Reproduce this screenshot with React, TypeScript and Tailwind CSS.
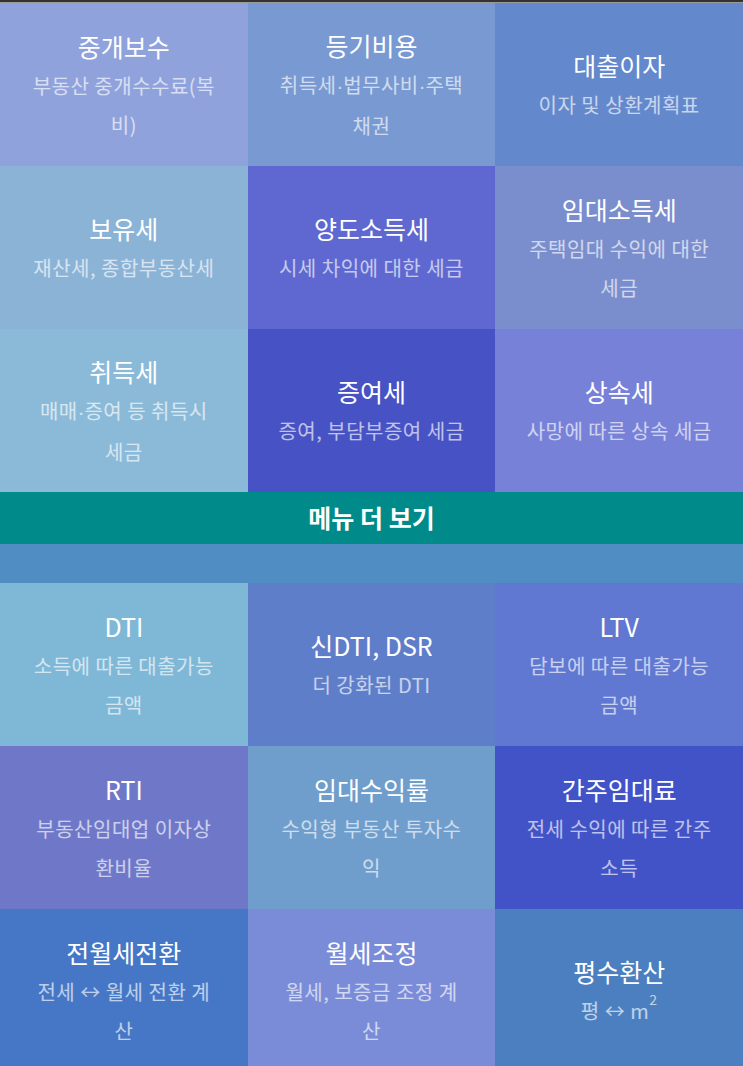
import type { ReactNode } from "react";

type Tile = { title: string; desc: ReactNode; bg: string };

const Dot = () => <span className="font-['Liberation_Sans'] tracking-normal">·</span>;

const topTiles: Tile[] = [
  { title: "중개보수", desc: "부동산 중개수수료(복비)", bg: "bg-[#8fa2dc]" },
  {
    title: "등기비용",
    desc: (
      <>
        취득세<Dot />법무사비<Dot />주택채권
      </>
    ),
    bg: "bg-[#7899d1]",
  },
  { title: "대출이자", desc: "이자 및 상환계획표", bg: "bg-[#6388cc]" },
  { title: "보유세", desc: "재산세, 종합부동산세", bg: "bg-[#8bb3d6]" },
  { title: "양도소득세", desc: "시세 차익에 대한 세금", bg: "bg-[#5e68d0]" },
  { title: "임대소득세", desc: "주택임대 수익에 대한 세금", bg: "bg-[#7a8ecd]" },
  {
    title: "취득세",
    desc: (
      <>
        매매<Dot />증여 등 취득시 세금
      </>
    ),
    bg: "bg-[#8bbad8]",
  },
  { title: "증여세", desc: "증여, 부담부증여 세금", bg: "bg-[#4752c4]" },
  { title: "상속세", desc: "사망에 따른 상속 세금", bg: "bg-[#7781d8]" },
];

const bottomTiles: Tile[] = [
  { title: "DTI", desc: "소득에 따른 대출가능 금액", bg: "bg-[#7fb8d6]" },
  { title: "신DTI, DSR", desc: "더 강화된 DTI", bg: "bg-[#5f7ec9]" },
  { title: "LTV", desc: "담보에 따른 대출가능 금액", bg: "bg-[#6078d1]" },
  { title: "RTI", desc: "부동산임대업 이자상환비율", bg: "bg-[#6f78c8]" },
  { title: "임대수익률", desc: "수익형 부동산 투자수익", bg: "bg-[#6f9dcc]" },
  { title: "간주임대료", desc: "전세 수익에 따른 간주 소득", bg: "bg-[#4253c8]" },
  { title: "전월세전환", desc: "전세 ↔ 월세 전환 계산", bg: "bg-[#4577c6]" },
  { title: "월세조정", desc: "월세, 보증금 조정 계산", bg: "bg-[#7a8cd8]" },
  {
    title: "평수환산",
    desc: (
      <>
        평 ↔ m<sup className="text-[14px] align-[7px]">2</sup>
      </>
    ),
    bg: "bg-[#4b7fc0]",
  },
];

function TileCard({ tile }: { tile: Tile }) {
  return (
    <a
      href="#"
      className={`${tile.bg} h-[163px] flex flex-col items-center justify-center px-6 text-center`}
    >
      <div className="text-[25px] leading-[40px] text-white">{tile.title}</div>
      <div className="max-w-[187px] text-[20px] leading-[39px] tracking-[0.5px] text-white/65 break-all">
        {tile.desc}
      </div>
    </a>
  );
}

export default function App() {
  return (
    <div
      className="w-[743px] h-[1066px] overflow-hidden bg-[#4f8dc3]"
      style={{ fontFamily: '"Noto Sans CJK KR", "Noto Sans", sans-serif' }}
    >
      <div className="h-[2px] bg-[#333333]" />
      <div className="h-px bg-[#9a9a9a]" />
      <div className="grid grid-cols-3">
        {topTiles.map((t) => (
          <TileCard key={t.title} tile={t} />
        ))}
      </div>
      <button className="w-full h-[52px] bg-[#008b8a] text-white text-[25px] font-bold">
        메뉴 더 보기
      </button>
      <div className="h-[39px] bg-[#4f8dc3]" />
      <div className="grid grid-cols-3">
        {bottomTiles.map((t) => (
          <TileCard key={t.title} tile={t} />
        ))}
      </div>
    </div>
  );
}
